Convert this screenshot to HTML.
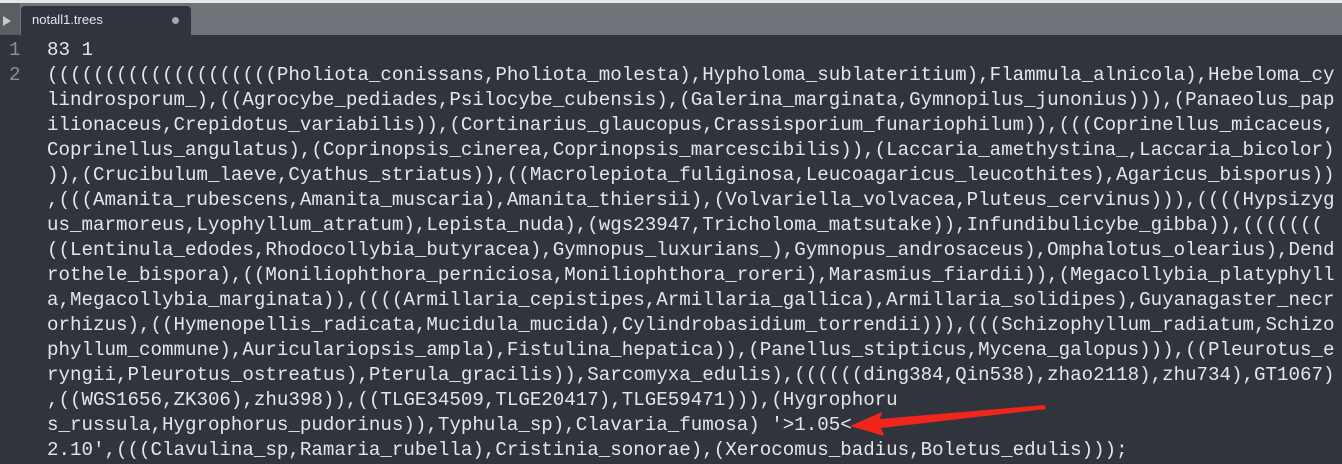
<!DOCTYPE html>
<html><head><meta charset="utf-8"><style>
html,body{margin:0;padding:0;width:1342px;height:464px;overflow:hidden;background:#30353d}
.top{position:absolute;left:0;top:0;width:1342px;height:3px;background:#e8e8e8}
.bar{position:absolute;left:0;top:3px;width:1342px;height:32px;background:#707379}
.side{position:absolute;left:0;top:3px;width:20px;height:32px;background:#5a5e64}
.tri{position:absolute;left:3px;top:13px;width:0;height:0;border-left:8px solid #c8c8c8;border-top:5px solid transparent;border-bottom:5px solid transparent}
.tab{position:absolute;left:21px;top:6px;width:170px;height:29px;background:#30353d;border-radius:4px 4px 0 0}
.tab span{position:absolute;left:11px;top:6px;font:13px "Liberation Sans",sans-serif;color:#e6e6e6}
.dot{position:absolute;left:151px;top:11px;width:7px;height:7px;border-radius:50%;background:#a8a8a8}
.code{position:absolute;left:0;top:0;font-family:"Liberation Mono",monospace;font-size:19.17px;color:#e3e7ec;white-space:pre}
.r{position:absolute;left:47px;height:25px;line-height:25px}
.n{position:absolute;left:9px;color:#8c9096;line-height:25px}
</style></head><body>
<div class="top"></div><div class="bar"></div><div class="side"><div class="tri"></div></div>
<div class="tab"><span>notall1.trees</span><div class="dot"></div></div>
<div class="code">
<div class="n" style="top:38px">1</div><div class="r" style="top:38px">83 1</div>
<div class="n" style="top:63px">2</div>
<div class="r" style="top:63px">((((((((((((((((((((Pholiota_conissans,Pholiota_molesta),Hypholoma_sublateritium),Flammula_alnicola),Hebeloma_cy</div>
<div class="r" style="top:88px">lindrosporum_),((Agrocybe_pediades,Psilocybe_cubensis),(Galerina_marginata,Gymnopilus_junonius))),(Panaeolus_pap</div>
<div class="r" style="top:113px">ilionaceus,Crepidotus_variabilis)),(Cortinarius_glaucopus,Crassisporium_funariophilum)),(((Coprinellus_micaceus,</div>
<div class="r" style="top:138px">Coprinellus_angulatus),(Coprinopsis_cinerea,Coprinopsis_marcescibilis)),(Laccaria_amethystina_,Laccaria_bicolor)</div>
<div class="r" style="top:163px">)),(Crucibulum_laeve,Cyathus_striatus)),((Macrolepiota_fuliginosa,Leucoagaricus_leucothites),Agaricus_bisporus))</div>
<div class="r" style="top:188px">,(((Amanita_rubescens,Amanita_muscaria),Amanita_thiersii),(Volvariella_volvacea,Pluteus_cervinus))),((((Hypsizyg</div>
<div class="r" style="top:213px">us_marmoreus,Lyophyllum_atratum),Lepista_nuda),(wgs23947,Tricholoma_matsutake)),Infundibulicybe_gibba)),(((((((</div>
<div class="r" style="top:238px">((Lentinula_edodes,Rhodocollybia_butyracea),Gymnopus_luxurians_),Gymnopus_androsaceus),Omphalotus_olearius),Dend</div>
<div class="r" style="top:263px">rothele_bispora),((Moniliophthora_perniciosa,Moniliophthora_roreri),Marasmius_fiardii)),(Megacollybia_platyphyll</div>
<div class="r" style="top:288px">a,Megacollybia_marginata)),((((Armillaria_cepistipes,Armillaria_gallica),Armillaria_solidipes),Guyanagaster_necr</div>
<div class="r" style="top:313px">orhizus),((Hymenopellis_radicata,Mucidula_mucida),Cylindrobasidium_torrendii))),(((Schizophyllum_radiatum,Schizo</div>
<div class="r" style="top:338px">phyllum_commune),Auriculariopsis_ampla),Fistulina_hepatica)),(Panellus_stipticus,Mycena_galopus))),((Pleurotus_e</div>
<div class="r" style="top:363px">ryngii,Pleurotus_ostreatus),Pterula_gracilis)),Sarcomyxa_edulis),((((((ding384,Qin538),zhao2118),zhu734),GT1067)</div>
<div class="r" style="top:388px">,((WGS1656,ZK306),zhu398)),((TLGE34509,TLGE20417),TLGE59471))),(Hygrophoru</div>
<div class="r" style="top:413px">s_russula,Hygrophorus_pudorinus)),Typhula_sp),Clavaria_fumosa) '&gt;1.05&lt;</div>
<div class="r" style="top:438px">2.10',(((Clavulina_sp,Ramaria_rubella),Cristinia_sonorae),(Xerocomus_badius,Boletus_edulis)));</div>
</div>
<svg style="position:absolute;left:0;top:0" width="1342" height="464">
<polygon points="1045,405 880,419 882,412 850,426 884,436 881,428 1046,409" fill="#f0261c"/>
</svg>
</body></html>
